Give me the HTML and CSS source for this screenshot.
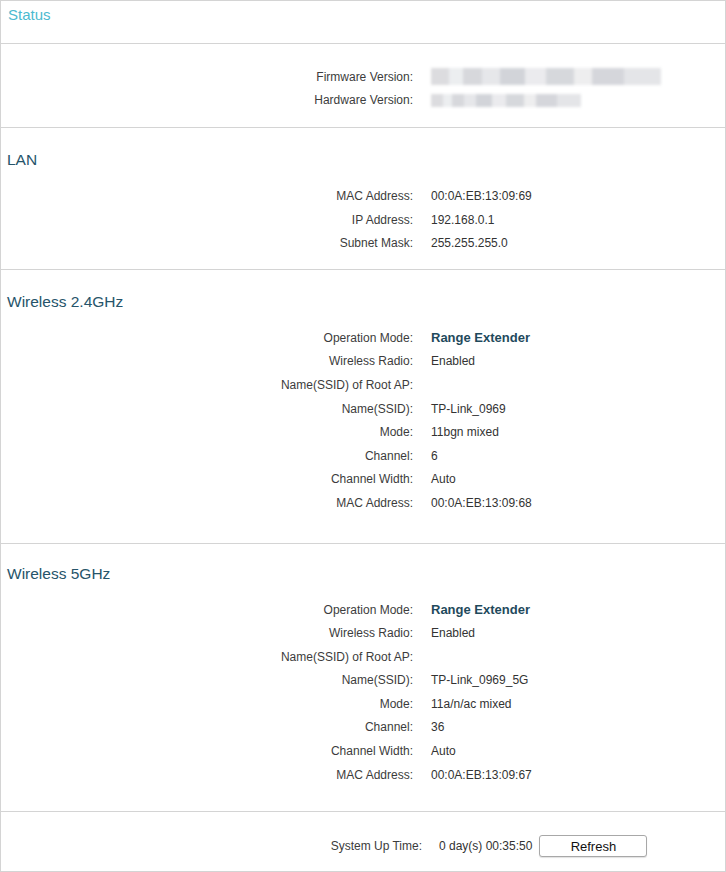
FILE: index.html
```html
<!DOCTYPE html>
<html lang="en">
<head>
  <meta charset="UTF-8">
  <title>Status</title>
  <link rel="stylesheet" href="styles.css">
</head>
<body>

<div class="panel">
  <div class="panel-head">Status</div>

  <div class="section section-info">
    <div class="row">
      <span class="label">Firmware Version:</span>
      <span class="value"><span class="blur blur-long"></span></span>
    </div>
    <div class="row">
      <span class="label">Hardware Version:</span>
      <span class="value"><span class="blur blur-short"></span></span>
    </div>
  </div>

  <div class="section section-lan">
    <h2>LAN</h2>
    <div class="row"><span class="label">MAC Address:</span><span class="value">00:0A:EB:13:09:69</span></div>
    <div class="row"><span class="label">IP Address:</span><span class="value">192.168.0.1</span></div>
    <div class="row"><span class="label">Subnet Mask:</span><span class="value">255.255.255.0</span></div>
  </div>

  <div class="section section-24">
    <h2>Wireless 2.4GHz</h2>
    <div class="row"><span class="label">Operation Mode:</span><span class="value strong">Range Extender</span></div>
    <div class="row"><span class="label">Wireless Radio:</span><span class="value">Enabled</span></div>
    <div class="row"><span class="label">Name(SSID) of Root AP:</span><span class="value"></span></div>
    <div class="row"><span class="label">Name(SSID):</span><span class="value">TP-Link_0969</span></div>
    <div class="row"><span class="label">Mode:</span><span class="value">11bgn mixed</span></div>
    <div class="row"><span class="label">Channel:</span><span class="value">6</span></div>
    <div class="row"><span class="label">Channel Width:</span><span class="value">Auto</span></div>
    <div class="row"><span class="label">MAC Address:</span><span class="value">00:0A:EB:13:09:68</span></div>
  </div>

  <div class="section section-5">
    <h2>Wireless 5GHz</h2>
    <div class="row"><span class="label">Operation Mode:</span><span class="value strong">Range Extender</span></div>
    <div class="row"><span class="label">Wireless Radio:</span><span class="value">Enabled</span></div>
    <div class="row"><span class="label">Name(SSID) of Root AP:</span><span class="value"></span></div>
    <div class="row"><span class="label">Name(SSID):</span><span class="value">TP-Link_0969_5G</span></div>
    <div class="row"><span class="label">Mode:</span><span class="value">11a/n/ac mixed</span></div>
    <div class="row"><span class="label">Channel:</span><span class="value">36</span></div>
    <div class="row"><span class="label">Channel Width:</span><span class="value">Auto</span></div>
    <div class="row"><span class="label">MAC Address:</span><span class="value">00:0A:EB:13:09:67</span></div>
  </div>

  <div class="section footer">
    <div class="uptime">
      <span class="label">System Up Time:</span>
      <span class="value">0 day(s) 00:35:50</span>
      <button class="btn">Refresh</button>
    </div>
  </div>
</div>

</body>
</html>
```

FILE: styles.css
```css
body {
  margin: 0;
  font-family: "Liberation Sans", Arial, sans-serif;
  color: #333;
  background: #fff;
}
.panel {
  border: 1px solid #d4d4d4;
  height: 870px;
  box-sizing: content-box;
}
.panel-head {
  height: 37px;
  padding: 5px 7px 0;
  font-size: 15px;
  line-height: 18px;
  color: #4cbad0;
}
.section {
  border-top: 1px solid #d4d4d4;
}
.section h2 {
  margin: 0 0 14px;
  padding-left: 6px;
  font-size: 15.5px;
  font-weight: normal;
  line-height: 20px;
  color: #26546a;
}
.section-info {
  padding: 21px 0 15px;
}
.section-lan {
  padding: 22px 0 14px;
}
.section-24 {
  padding: 22px 0 28px;
}
.section-5 {
  padding: 20px 0 25px;
}
.row {
  display: grid;
  grid-template-columns: 412px 1fr;
  column-gap: 18px;
  height: 23.6px;
  align-items: center;
  font-size: 12px;
}
.label {
  text-align: right;
  color: #3c3c3c;
}
.value {
  color: #333;
}
.strong {
  font-size: 13px;
  font-weight: bold;
  color: #1f4a5c;
}
.blur {
  display: block;
  filter: blur(1.5px);
  background:
    linear-gradient(90deg, #dcdcdf 0 8%, #eceef0 8% 14%, #d7d8dc 14% 22%, #e6e7ea 22% 30%, #d2d4d9 30% 41%, #ebebee 41% 50%, #d6d8dc 50% 62%, #eeeeef 62% 70%, #d5d6db 70% 84%, #e4e5e8 84% 100%);
}
.blur-long {
  width: 230px;
  height: 17px;
}
.blur-short {
  width: 150px;
  height: 13px;
}
.footer {
  padding: 22px 0 0;
}
.uptime {
  display: flex;
  align-items: center;
  height: 24px;
  font-size: 12px;
}
.uptime .label {
  width: 421px;
}
.uptime .value {
  margin-left: 17px;
}
.btn {
  margin-left: 7px;
  width: 108px;
  height: 22px;
  padding: 0;
  font-family: "Liberation Sans", Arial, sans-serif;
  font-size: 13px;
  color: #111;
  background: #fff;
  border: 1px solid #a8a8a8;
  border-radius: 3px;
  box-shadow: 0 1px 1px rgba(0, 0, 0, 0.12);
}
```
